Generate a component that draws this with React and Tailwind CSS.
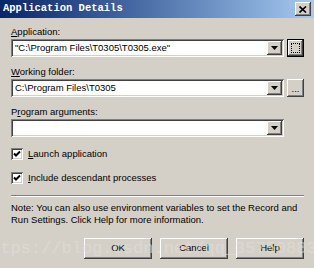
import React from 'react';

const raised =
  'bg-[#d4d0c8] shadow-[inset_-1px_-1px_#404040,inset_1px_1px_#ffffff,inset_-2px_-2px_#808080,inset_2px_2px_#d4d0c8]';
const sunken =
  'bg-white shadow-[inset_1px_1px_#808080,inset_-1px_-1px_#ffffff,inset_2px_2px_#404040,inset_-2px_-2px_#d4d0c8]';

function Arrow() {
  return (
    <svg width="7" height="4" viewBox="0 0 7 4">
      <polygon points="0,0 7,0 3.5,4" fill="#000" />
    </svg>
  );
}

function Combo({ value }) {
  return (
    <div className={`w-[273px] h-[18px] flex items-center p-[2px] ${sunken}`}>
      <span className="flex-1 pl-[2px] leading-[14px] whitespace-nowrap overflow-hidden">{value}</span>
      <div className={`w-[15px] h-[14px] flex items-center justify-center ${raised}`}>
        <Arrow />
      </div>
    </div>
  );
}

function Field({ label, value, browse, first }) {
  return (
    <div className={first ? '' : 'mt-[8px]'}>
      <div className="h-[13px] leading-[13px] mb-[1px] whitespace-nowrap">{label}</div>
      <div className="flex gap-[3px]">
        <Combo value={value} />
        {browse === 'focus' && (
          <div className="w-[17px] h-[18px] border border-black">
            <div className={`w-full h-full p-[3px] ${raised}`}>
              <div className="w-full h-full border border-dotted border-black" />
            </div>
          </div>
        )}
        {browse === 'normal' && (
          <div className={`w-[17px] h-[18px] flex items-end justify-center pb-[4px] leading-[8px] ${raised}`}>
            ...
          </div>
        )}
      </div>
    </div>
  );
}

function Check({ children, className }) {
  return (
    <div className={`flex items-center gap-[5px] h-[12px] ${className}`}>
      <div className={`w-[12px] h-[12px] flex items-center justify-center ${sunken}`}>
        <svg width="8" height="8" viewBox="0 0 8 8">
          <polyline points="1,3.5 3,5.5 7,1.5" fill="none" stroke="#000" strokeWidth="2" />
        </svg>
      </div>
      <span className="leading-[12px]">{children}</span>
    </div>
  );
}

function Button({ children }) {
  return (
    <div className={`w-[68px] h-[21px] flex items-center justify-center ${raised}`}>{children}</div>
  );
}

export default function App() {
  return (
    <div className="relative w-[314px] h-[268px] overflow-hidden bg-[#d4d0c8] text-black text-[9.5px] font-['Liberation_Sans',Arial,sans-serif]">
      <div className="h-[18px] flex items-center px-[3px] bg-linear-to-r from-[#0a246a] to-[#a6caf0]">
        <span className="text-white font-bold text-[10.5px] font-['Liberation_Mono',monospace]">
          Application Details
        </span>
        <div className={`ml-auto w-[16px] h-[14px] flex items-center justify-center ${raised}`}>
          <svg width="8" height="7" viewBox="0 0 8 7">
            <path d="M0.5 0.5 L7 6.5 M7 0.5 L0.5 6.5" stroke="#000" strokeWidth="1.6" />
          </svg>
        </div>
      </div>

      <div className="pl-[11px] pr-[10px] pt-[7px]">
        <Field
          first
          label={<><span className="underline">A</span>pplication:</>}
          value={'"C:\\Program Files\\T0305\\T0305.exe"'}
          browse="focus"
        />
        <Field
          label={<><span className="underline">W</span>orking folder:</>}
          value="C:\Program Files\T0305"
          browse="normal"
        />
        <Field
          label={<>P<span className="underline">r</span>ogram arguments:</>}
          value=""
        />

        <Check className="mt-[11px]">
          <span className="underline">L</span>aunch application
        </Check>
        <Check className="mt-[12px]">
          <span className="underline">I</span>nclude descendant processes
        </Check>

        <div className="mt-[11px] h-[2px] border-t border-t-[#808080] border-b border-b-white" />

        <p className="mt-[5px] leading-[12px]">
          Note: You can also use environment variables to set the Record and Run Settings. Click Help for more information.
        </p>

        <div className="mt-[12px] flex justify-end gap-[8px]">
          <Button>OK</Button>
          <Button>Cancel</Button>
          <Button>Help</Button>
        </div>
      </div>

      <div className="pointer-events-none absolute left-[-20px] top-[240px] whitespace-nowrap text-[17px] leading-[17px] text-[#e2dfda] font-['Liberation_Mono',monospace] opacity-60">
        https://blog.csdn.net/qq_35750883
      </div>
    </div>
  );
}
